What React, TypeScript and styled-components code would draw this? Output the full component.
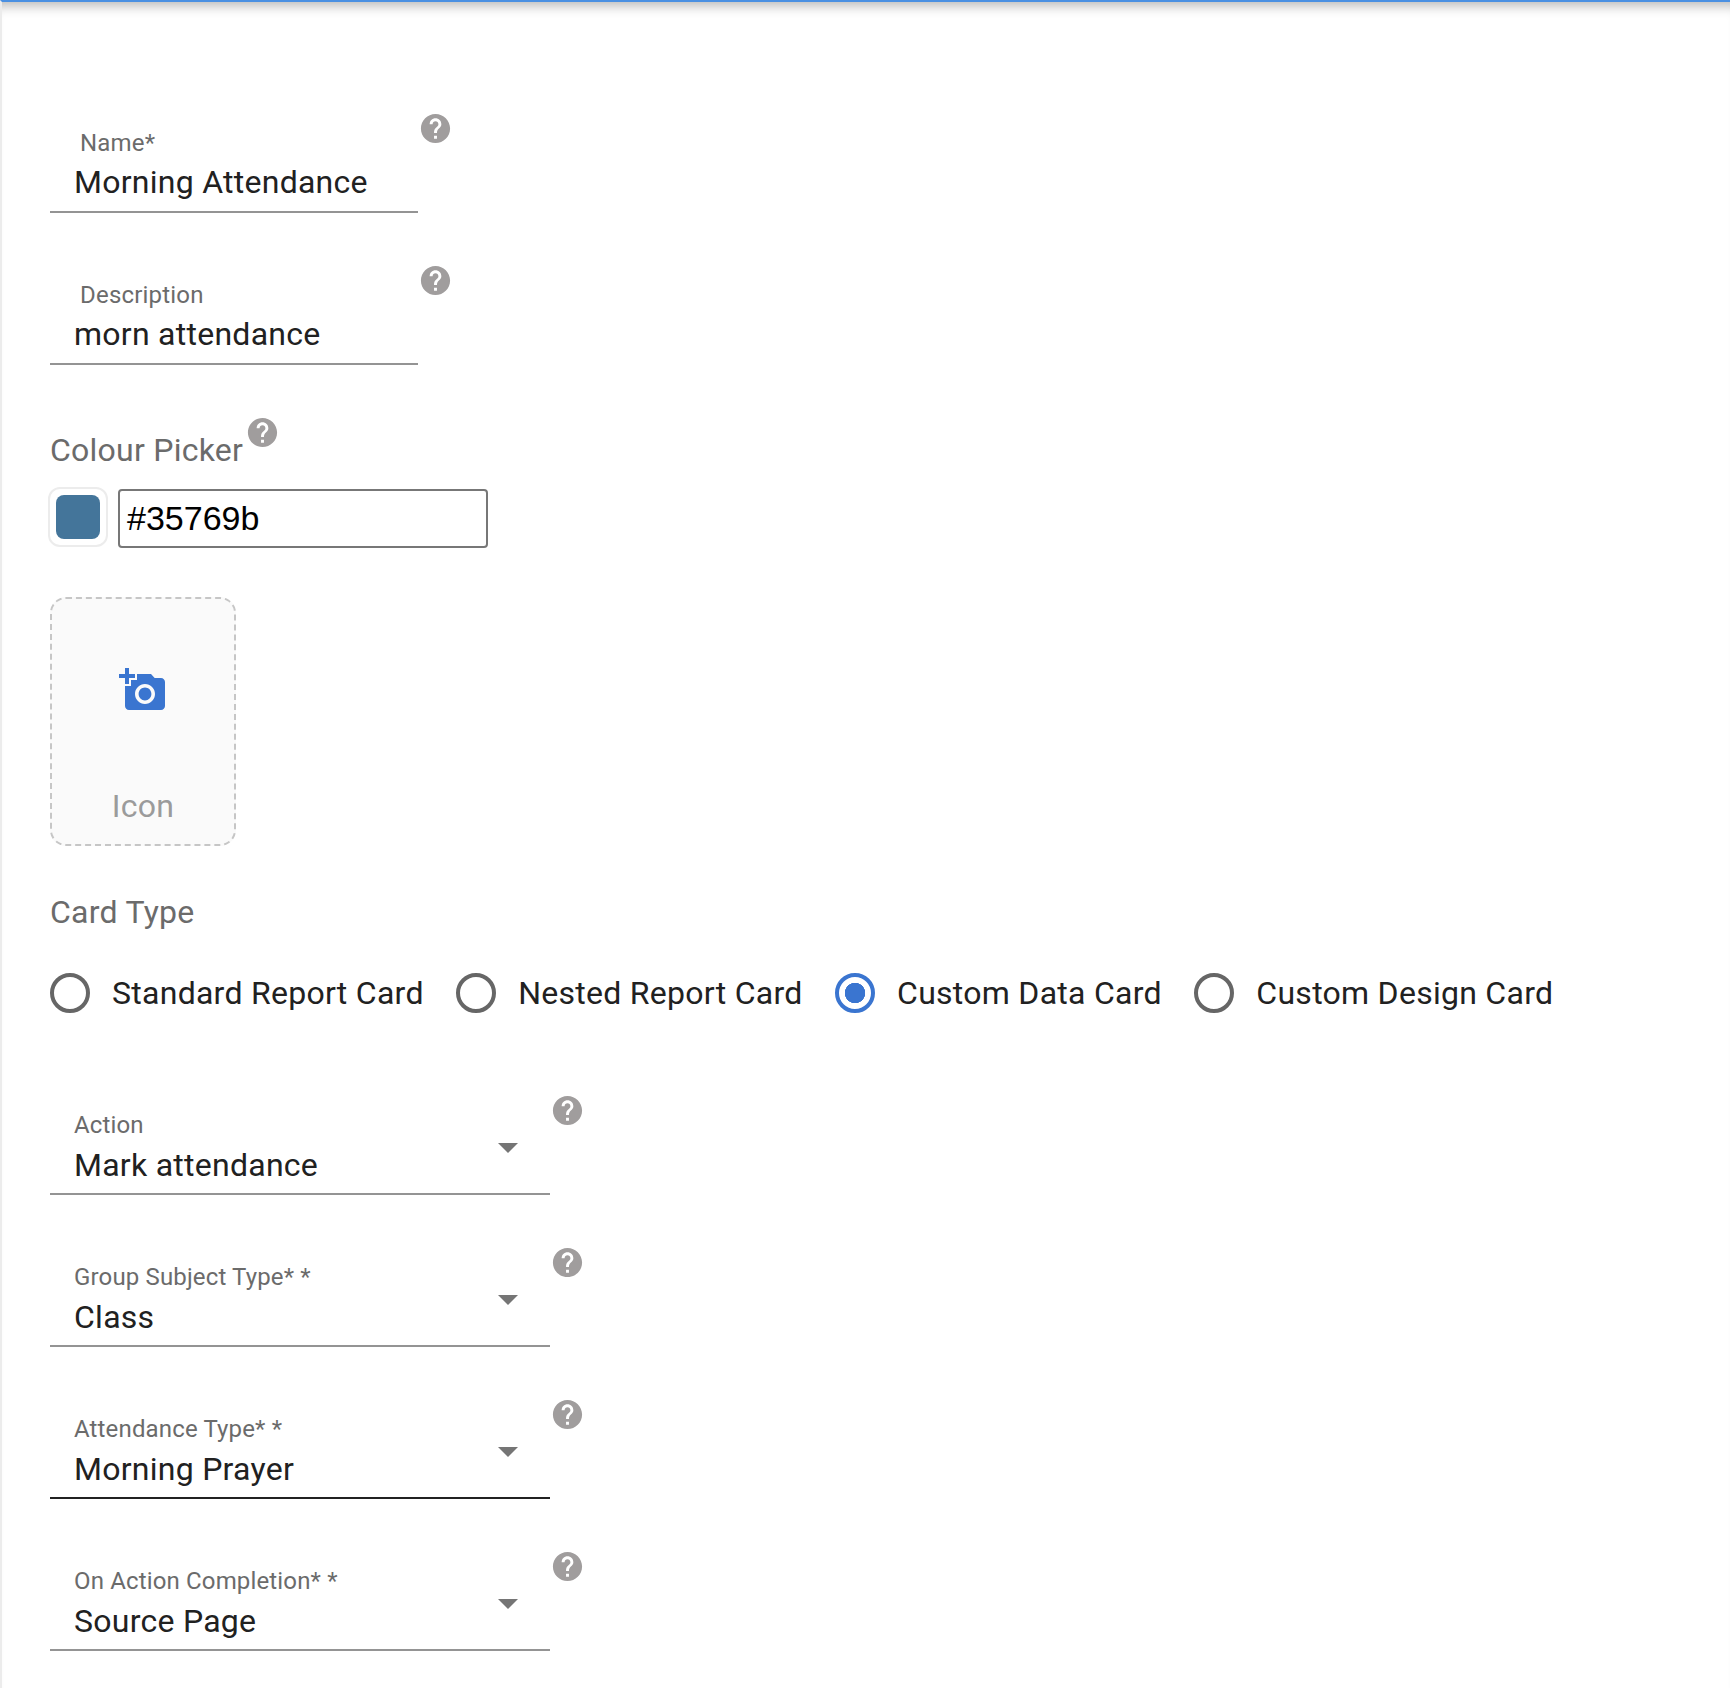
import styled, { createGlobalStyle } from "styled-components";

const GlobalStyle = createGlobalStyle`
  html, body {
    margin: 0;
    padding: 0;
    background: #fff;
    font-family: Roboto, "Liberation Sans", sans-serif;
  }
`;

const HELP_PATH =
  "M12 2C6.48 2 2 6.48 2 12s4.48 10 10 10 10-4.48 10-10S17.52 2 12 2zm1 17h-2v-2h2v2zm2.07-7.75l-.9.92C13.45 12.9 13 13.5 13 15h-2v-.5c0-1.1.45-2.1 1.17-2.83l1.24-1.26c.37-.36.59-.86.59-1.41 0-1.1-.9-2-2-2s-2 .9-2 2H8c0-2.21 1.79-4 4-4s4 1.79 4 4c0 .88-.36 1.68-.93 2.25z";
const CAMERA_PATH =
  "M3 4V1h2v3h3v2H5v3H3V6H0V4h3zm3 6V7h3V4h7l1.83 2H21c1.1 0 2 .9 2 2v12c0 1.1-.9 2-2 2H5c-1.1 0-2-.9-2-2V10h3zm7 9c2.76 0 5-2.24 5-5s-2.24-5-5-5-5 2.24-5 5 2.24 5 5 5zm-3.2-5c0 1.77 1.43 3.2 3.2 3.2s3.2-1.43 3.2-3.2-1.43-3.2-3.2-3.2-3.2 1.43-3.2 3.2z";

const HelpIcon = () => (
  <HelpSvg viewBox="0 0 24 24">
    <path d={HELP_PATH} />
  </HelpSvg>
);

const TextRow = ({ label, value }: { label: string; value: string }) => (
  <FieldRow>
    <TextField>
      <TextLabel>{label}</TextLabel>
      <Value>{value}</Value>
    </TextField>
    <HelpIcon />
  </FieldRow>
);

const SelectRow = ({ label, value, active }: { label: string; value: string; active?: boolean }) => (
  <FieldRow>
    <SelectField $active={active}>
      <SelectLabel>{label}</SelectLabel>
      <Value>{value}</Value>
      <Arrow viewBox="0 0 24 24">
        <path d="M7 10l5 5 5-5z" />
      </Arrow>
    </SelectField>
    <HelpIcon />
  </FieldRow>
);

const cardTypes = [
  { label: "Standard Report Card" },
  { label: "Nested Report Card" },
  { label: "Custom Data Card", checked: true },
  { label: "Custom Design Card" },
];

export default function App() {
  return (
    <>
      <GlobalStyle />
      <Page>
        <Form>
          <TextRow label="Name*" value="Morning Attendance" />
          <TextRow label="Description" value="morn attendance" />
          <PickerHeading>
            <SectionLabel>Colour Picker</SectionLabel>
            <PickerHelp>
              <HelpIcon />
            </PickerHelp>
          </PickerHeading>
          <PickerRow>
            <Swatch>
              <SwatchColor />
            </Swatch>
            <HexBox>#35769b</HexBox>
          </PickerRow>
          <UploadBox>
            <CameraSvg viewBox="0 0 24 24">
              <path d={CAMERA_PATH} />
            </CameraSvg>
            <UploadLabel>Icon</UploadLabel>
          </UploadBox>
          <CardTypeLabel>Card Type</CardTypeLabel>
          <RadioGroup>
            {cardTypes.map((c) => (
              <RadioItem key={c.label}>
                <RadioCircle $checked={c.checked} />
                <RadioText>{c.label}</RadioText>
              </RadioItem>
            ))}
          </RadioGroup>
          <SelectRow label="Action" value="Mark attendance" />
          <SelectRow label="Group Subject Type* *" value="Class" />
          <SelectRow label="Attendance Type* *" value="Morning Prayer" active />
          <SelectRow label="On Action Completion* *" value="Source Page" />
        </Form>
      </Page>
    </>
  );
}

const Page = styled.div`
  box-sizing: border-box;
  width: 1730px;
  height: 1688px;
  overflow: hidden;
  background: #fff;
  border-top: 2px solid #4a90e2;
  border-left: 2px solid #ececec;
  box-shadow: inset 0 14px 12px -10px rgba(0, 0, 0, 0.28);
`;

const Form = styled.div`
  display: flex;
  flex-direction: column;
  align-items: flex-start;
  padding: 109px 0 0 48px;
`;

const FieldRow = styled.div`
  display: flex;
  align-items: flex-start;
  margin-bottom: 50px;
`;

const HelpSvg = styled.svg`
  display: block;
  width: 35px;
  height: 35px;
  margin-left: -2px;
  fill: #a09d9d;
`;

const Value = styled.div`
  height: 40px;
  font-size: 32px;
  line-height: 40px;
  letter-spacing: 0.26px;
  color: #212121;
  white-space: nowrap;
`;

const TextField = styled.div`
  box-sizing: border-box;
  width: 368px;
  height: 102px;
  padding: 17px 0 0 24px;
  border-bottom: 2px solid #949494;
  margin-right: 2px;
`;

const TextLabel = styled.div`
  height: 34px;
  padding-left: 6px;
  font-size: 24px;
  line-height: 30px;
  letter-spacing: 0.2px;
  color: #6b6b6b;
`;

const SelectField = styled.div<{ $active?: boolean }>`
  position: relative;
  box-sizing: border-box;
  width: 500px;
  height: 102px;
  margin-right: 2px;
  padding: 17px 0 0 24px;
  border-bottom: 2px solid ${(p) => (p.$active ? "#212121" : "#949494")};
`;

const SelectLabel = styled.div`
  height: 35px;
  font-size: 24px;
  line-height: 30px;
  letter-spacing: 0.15px;
  color: #6b6b6b;
  white-space: nowrap;
`;

const Arrow = styled.svg`
  position: absolute;
  top: 30px;
  right: 18px;
  width: 48px;
  height: 48px;
  fill: #757575;
`;

const PickerHeading = styled.div`
  display: flex;
  align-items: flex-start;
`;

const SectionLabel = styled.div`
  font-size: 32px;
  line-height: 44px;
  letter-spacing: 0.24px;
  margin-top: 13px;
  color: #6b6b6b;
  white-space: nowrap;
`;

const PickerHelp = styled.div`
  margin-left: 4px;
`;

const PickerRow = styled.div`
  display: flex;
  align-items: flex-start;
  margin-top: 15px;
`;

const Swatch = styled.div`
  box-sizing: border-box;
  width: 60px;
  height: 60px;
  margin-left: -2px;
  padding: 6px;
  border: 2px solid #ececec;
  border-radius: 12px;
  background: #fff;
`;

const SwatchColor = styled.div`
  width: 44px;
  height: 44px;
  border-radius: 8px;
  background: #44759a;
`;

const HexBox = styled.div`
  box-sizing: border-box;
  width: 370px;
  height: 59px;
  margin: 2px 0 0 10px;
  padding-left: 7px;
  border: 2px solid #777;
  border-radius: 4px;
  font-family: "Liberation Sans", Arial, sans-serif;
  font-size: 34px;
  line-height: 55px;
  color: #000;
`;

const UploadBox = styled.div`
  box-sizing: border-box;
  width: 186px;
  height: 249px;
  margin-top: 49px;
  padding-top: 67px;
  display: flex;
  flex-direction: column;
  align-items: center;
  background: #fafafa;
  border: 2px dashed #c6c6c6;
  border-radius: 16px;
`;

const CameraSvg = styled.svg`
  display: block;
  width: 48px;
  height: 48px;
  fill: #3a75d0;
`;

const UploadLabel = styled.div`
  margin-top: 72px;
  font-size: 32px;
  line-height: 40px;
  letter-spacing: 0.26px;
  color: #9b9b9b;
`;

const CardTypeLabel = styled.div`
  margin-top: 44px;
  font-size: 32px;
  line-height: 44px;
  letter-spacing: 0.26px;
  color: #6b6b6b;
`;

const RadioGroup = styled.div`
  display: flex;
  align-items: center;
  margin-top: 37px;
  margin-bottom: 78px;
`;

const RadioItem = styled.div`
  display: flex;
  align-items: center;
  margin-right: 32.5px;
`;

const RadioCircle = styled.div<{ $checked?: boolean }>`
  box-sizing: border-box;
  width: 40px;
  height: 40px;
  border-radius: 50%;
  border: 4px solid ${(p) => (p.$checked ? "#3a75d0" : "#666")};
  background: ${(p) => (p.$checked ? "radial-gradient(circle, #3a75d0 0 10px, #fff 10.5px)" : "#fff")};
`;

const RadioText = styled.div`
  margin-left: 22px;
  font-size: 32px;
  line-height: 44px;
  letter-spacing: 0.27px;
  color: #212121;
  white-space: nowrap;
`;
